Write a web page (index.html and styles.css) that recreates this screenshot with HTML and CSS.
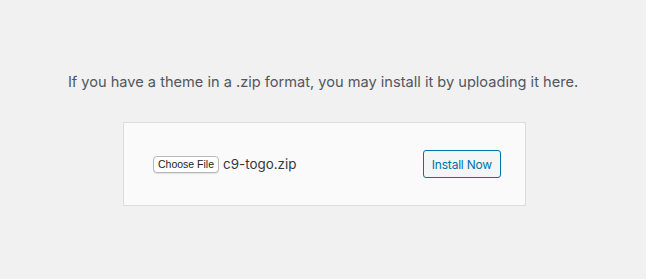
FILE: index.html
```html
<!doctype html>
<html lang="en">
  <head>
    <meta charset="UTF-8" />
    <title>Upload Theme</title>
    <link rel="stylesheet" href="styles.css">
  </head>
  <body>
    <div class="upload-theme">
      <p class="install-help">If you have a theme in a .zip format, you may install it by uploading it here.</p>
      <form class="upload-form">
        <div class="file-field">
          <span class="file-button">Choose File</span>
          <span class="file-name">c9-togo.zip</span>
        </div>
        <button type="button" class="button">Install Now</button>
      </form>
    </div>
  </body>
</html>
```

FILE: styles.css
```css
body {
  margin: 0;
  background-color: #f1f1f1;
  font-family: Inter, "Noto Sans", sans-serif;
  color: #50575e;
}
.upload-theme {
  padding-top: 72px;
}
.install-help {
  margin: 0;
  text-align: center;
  font-size: 14.6px;
  line-height: 20px;
}
.upload-form {
  box-sizing: border-box;
  width: 403px;
  height: 84px;
  margin: 30px 0 0 123px;
  padding: 0 24px 0 29px;
  display: flex;
  align-items: center;
  justify-content: space-between;
  background-color: #fafafa;
  border: 1px solid #dcdcde;
}
.file-field {
  display: flex;
  align-items: center;
  gap: 4px;
}
.file-button {
  box-sizing: border-box;
  height: 17px;
  padding: 0 4px;
  font-family: "Liberation Sans", Arial, sans-serif;
  font-size: 10.5px;
  line-height: 15px;
  color: #222;
  background-color: #fff;
  border: 1px solid #b8b8b8;
  border-radius: 4px;
  box-shadow: 0 1px 1px rgba(0, 0, 0, 0.1);
}
.file-name {
  font-size: 13.4px;
  color: #32373c;
}
.button {
  box-sizing: border-box;
  height: 28px;
  padding: 0 8px;
  font-family: inherit;
  font-size: 12px;
  letter-spacing: -0.2px;
  color: #0073aa;
  background-color: #f3f5f6;
  border: 1px solid #0073aa;
  border-radius: 3px;
  cursor: pointer;
}
```
